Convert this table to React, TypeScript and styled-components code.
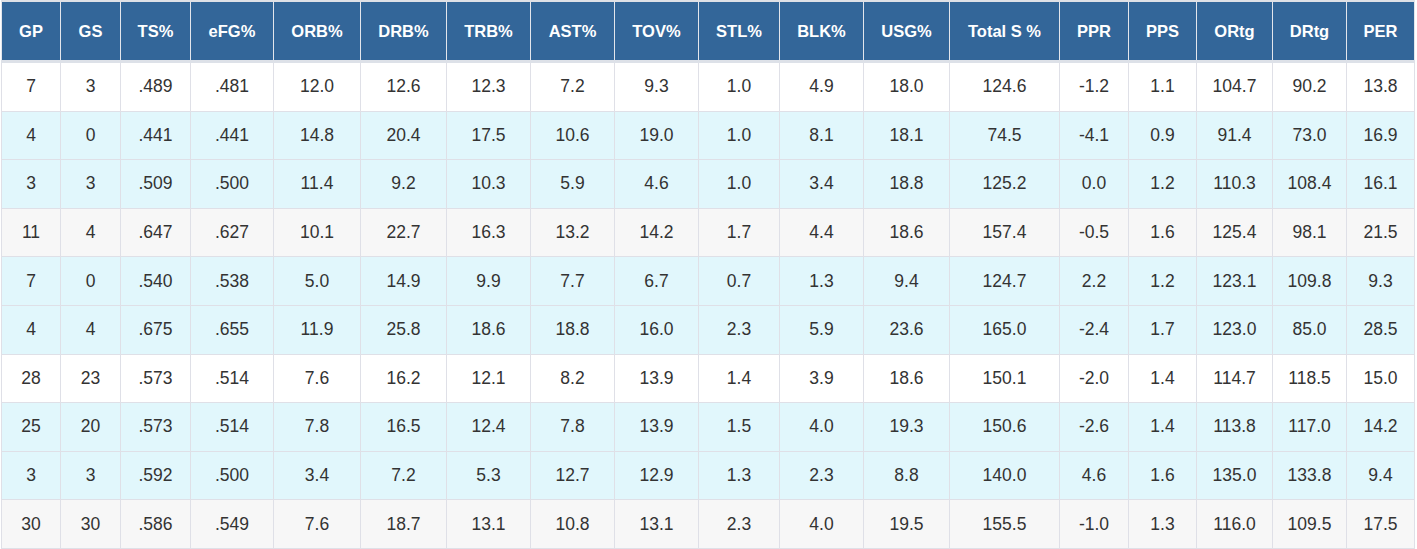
import styled, { createGlobalStyle } from "styled-components";

const GlobalStyle = createGlobalStyle`
	html, body {
		margin: 0;
		padding: 0;
		background: #ffffff;
	}
	body {
		font-family: "Liberation Sans", Arial, sans-serif;
	}
`;

type Tone = "white" | "cyan" | "grey";

const toneColors: Record<Tone, string> = {
	white: "#ffffff",
	cyan: "#e1f7fc",
	grey: "#f7f7f7",
};

const columns: { label: string; width: number }[] = [
	{ label: "GP", width: 59 },
	{ label: "GS", width: 60 },
	{ label: "TS%", width: 70 },
	{ label: "eFG%", width: 83 },
	{ label: "ORB%", width: 87 },
	{ label: "DRB%", width: 86 },
	{ label: "TRB%", width: 84 },
	{ label: "AST%", width: 84 },
	{ label: "TOV%", width: 84 },
	{ label: "STL%", width: 81 },
	{ label: "BLK%", width: 84 },
	{ label: "USG%", width: 86 },
	{ label: "Total S %", width: 110 },
	{ label: "PPR", width: 69 },
	{ label: "PPS", width: 68 },
	{ label: "ORtg", width: 76 },
	{ label: "DRtg", width: 74 },
	{ label: "PER", width: 68 },
];

const rows: { tone: Tone; values: string[] }[] = [
	{ tone: "white", values: ["7", "3", ".489", ".481", "12.0", "12.6", "12.3", "7.2", "9.3", "1.0", "4.9", "18.0", "124.6", "-1.2", "1.1", "104.7", "90.2", "13.8"] },
	{ tone: "cyan", values: ["4", "0", ".441", ".441", "14.8", "20.4", "17.5", "10.6", "19.0", "1.0", "8.1", "18.1", "74.5", "-4.1", "0.9", "91.4", "73.0", "16.9"] },
	{ tone: "cyan", values: ["3", "3", ".509", ".500", "11.4", "9.2", "10.3", "5.9", "4.6", "1.0", "3.4", "18.8", "125.2", "0.0", "1.2", "110.3", "108.4", "16.1"] },
	{ tone: "grey", values: ["11", "4", ".647", ".627", "10.1", "22.7", "16.3", "13.2", "14.2", "1.7", "4.4", "18.6", "157.4", "-0.5", "1.6", "125.4", "98.1", "21.5"] },
	{ tone: "cyan", values: ["7", "0", ".540", ".538", "5.0", "14.9", "9.9", "7.7", "6.7", "0.7", "1.3", "9.4", "124.7", "2.2", "1.2", "123.1", "109.8", "9.3"] },
	{ tone: "cyan", values: ["4", "4", ".675", ".655", "11.9", "25.8", "18.6", "18.8", "16.0", "2.3", "5.9", "23.6", "165.0", "-2.4", "1.7", "123.0", "85.0", "28.5"] },
	{ tone: "white", values: ["28", "23", ".573", ".514", "7.6", "16.2", "12.1", "8.2", "13.9", "1.4", "3.9", "18.6", "150.1", "-2.0", "1.4", "114.7", "118.5", "15.0"] },
	{ tone: "cyan", values: ["25", "20", ".573", ".514", "7.8", "16.5", "12.4", "7.8", "13.9", "1.5", "4.0", "19.3", "150.6", "-2.6", "1.4", "113.8", "117.0", "14.2"] },
	{ tone: "cyan", values: ["3", "3", ".592", ".500", "3.4", "7.2", "5.3", "12.7", "12.9", "1.3", "2.3", "8.8", "140.0", "4.6", "1.6", "135.0", "133.8", "9.4"] },
	{ tone: "grey", values: ["30", "30", ".586", ".549", "7.6", "18.7", "13.1", "10.8", "13.1", "2.3", "4.0", "19.5", "155.5", "-1.0", "1.3", "116.0", "109.5", "17.5"] },
];

const TableWrapper = styled.div`
	width: 1415px;
	padding-left: 1px;
	overflow: hidden;
`;

const StatsTable = styled.table`
	width: 1413px;
	table-layout: fixed;
	border-collapse: collapse;
	font-family: "Liberation Sans", Arial, sans-serif;
`;

const Col = styled.col<{ $width: number }>`
	width: ${(p) => p.$width}px;
`;

const HeadCell = styled.th`
	height: 58px;
	padding: 0 4px;
	background-color: #336699;
	color: #ffffff;
	font-size: 16.5px;
	font-weight: bold;
	text-align: center;
	vertical-align: middle;
	white-space: nowrap;
	border-top: 2px solid #dfe1e6;
	border-bottom: 3px solid #dde1e8;
	border-left: 1px solid #e3e6ec;
	border-right: 1px solid #e3e6ec;
`;

const Row = styled.tr<{ $tone: Tone }>`
	background-color: ${(p) => toneColors[p.$tone]};
`;

const Cell = styled.td`
	height: 47.6px;
	padding: 0 4px;
	color: #333333;
	font-size: 17.5px;
	text-align: center;
	vertical-align: middle;
	white-space: nowrap;
	border: 1px solid #dfe0e7;
`;

export default function App() {
	return (
		<>
			<GlobalStyle />
			<TableWrapper>
				<StatsTable>
					<colgroup>
						{columns.map((col) => (
							<Col key={col.label} $width={col.width} />
						))}
					</colgroup>
					<thead>
						<tr>
							{columns.map((col) => (
								<HeadCell key={col.label}>{col.label}</HeadCell>
							))}
						</tr>
					</thead>
					<tbody>
						{rows.map((row, i) => (
							<Row key={i} $tone={row.tone}>
								{row.values.map((value, j) => (
									<Cell key={j}>{value}</Cell>
								))}
							</Row>
						))}
					</tbody>
				</StatsTable>
			</TableWrapper>
		</>
	);
}
